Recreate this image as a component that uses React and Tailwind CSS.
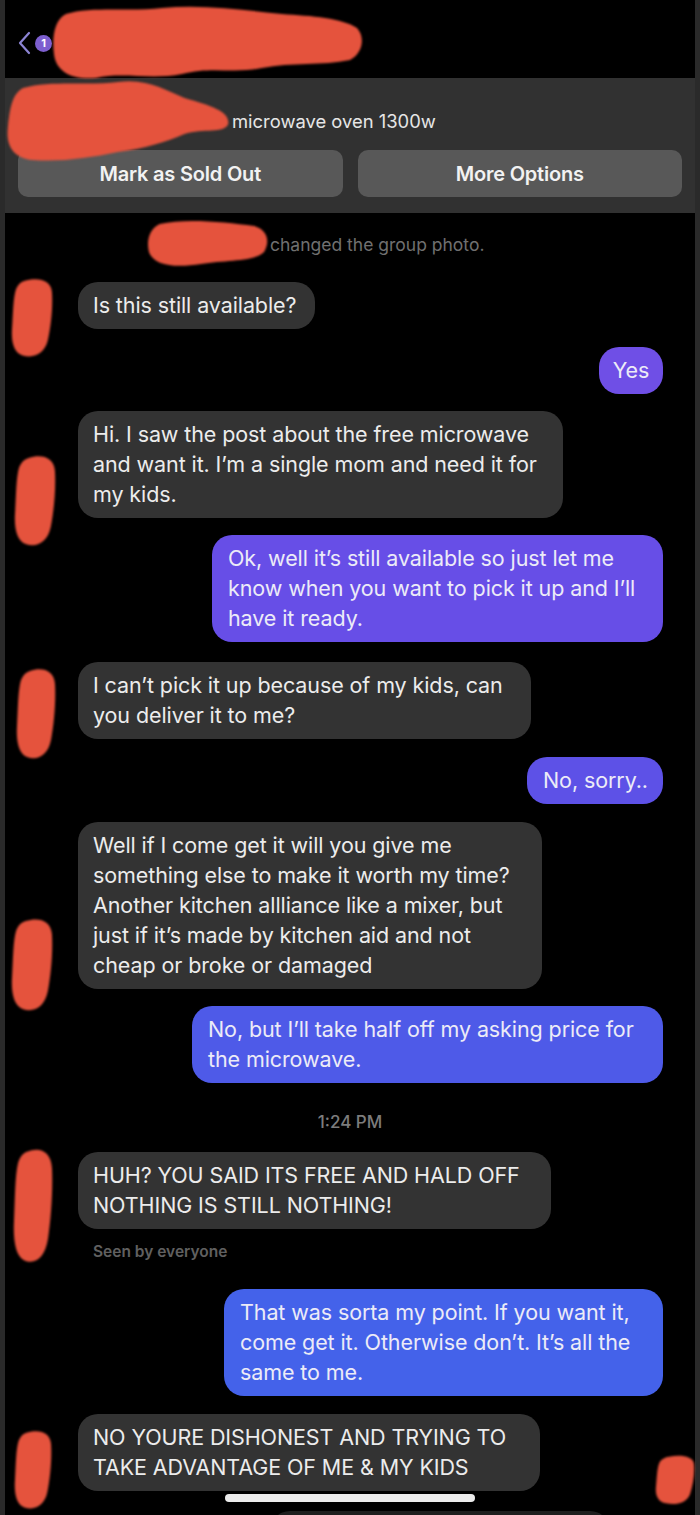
import React from "react";

const FONT = { fontFamily: "Inter, 'Noto Sans', sans-serif" };

function Blob({ className, d, vb }) {
  return (
    <svg className={"absolute blur-[1px] " + className} viewBox={vb} preserveAspectRatio="none">
      <path d={d} fill="#e5533d" />
    </svg>
  );
}

const avatarD =
  "M14 3 C26 -1 38 2 39 16 C40 34 38 56 35 72 C32 87 22 93 11 89 C3 86 0 74 1 58 C2 40 2 22 5 12 C7 7 10 4 14 3 Z";

function Recv({ lines, w, mt }) {
  return (
    <div className={"ml-[73px] shrink-0 rounded-[20px] bg-[#333333] pl-[15px] pt-2 pb-[9px] text-[21.5px] leading-[30px] tracking-[-0.1px] text-[#ececec] " + w + " " + mt}>
      {lines.map((l, i) => (
        <div key={i} className="whitespace-nowrap">{l}</div>
      ))}
    </div>
  );
}

function Sent({ lines, w, mt, bg, center }) {
  return (
    <div
      className={
        "self-end mr-[32px] shrink-0 rounded-[20px] pt-2 pb-[9px] text-[21.5px] leading-[30px] tracking-[-0.1px] text-[#ecebf7] " +
        (center ? "text-center " : "pl-[16px] ") +
        w + " " + mt + " " + bg
      }
    >
      {lines.map((l, i) => (
        <div key={i} className="whitespace-nowrap">{l}</div>
      ))}
    </div>
  );
}

export default function App() {
  return (
    <div className="relative h-[1515px] w-[700px] overflow-hidden bg-[#2a2a2a] pl-[5px] pr-[5px]" style={FONT}>
      <div className="relative h-full overflow-hidden bg-black">
        {/* header */}
        <div className="flex h-[78px] items-center pl-[13px]">
          <svg width="14" height="24" viewBox="0 0 14 24" className="mt-[8px]">
            <path d="M11 2 L2 12 L11 22" fill="none" stroke="#8c84d4" strokeWidth="2.2" strokeLinecap="round" strokeLinejoin="round" />
          </svg>
          <div className="ml-[3px] mt-[8px] flex h-[17px] w-[17px] items-center justify-center rounded-full bg-[#7d5fcf] text-[11px] font-bold text-white">
            1
          </div>
        </div>

        {/* listing panel */}
        <div className="flex h-[135px] flex-col bg-[#313131] px-[13px]">
          <div className="mt-[30px] pl-[214px] text-[18.4px] leading-[26px] text-[#e6e6e6]">microwave oven 1300w</div>
          <div className="mt-[16px] grid grid-cols-2 gap-[15px]">
            <div className="flex h-[47px] items-center justify-center rounded-[10px] bg-[#585858] text-[20px] font-semibold tracking-[-0.2px] text-[#f2f2f2]">
              Mark as Sold Out
            </div>
            <div className="flex h-[47px] items-center justify-center rounded-[10px] bg-[#585858] text-[20px] font-semibold tracking-[-0.2px] text-[#f2f2f2]">
              More Options
            </div>
          </div>
        </div>

        {/* chat */}
        <div className="flex flex-col">
          <div className="mt-[21px] pl-[265px] text-[17.5px] leading-[22px] text-[#707070]">changed the group photo.</div>

          <Recv mt="mt-[26px]" w="w-[237px]" lines={["Is this still available?"]} />
          <Sent mt="mt-[18px]" w="w-[64px]" bg="bg-[#6f4fe6]" center lines={["Yes"]} />
          <Recv
            mt="mt-[17px]"
            w="w-[485px]"
            lines={[
              "Hi. I saw the post about the free microwave",
              "and want it. I\u2019m a single mom and need it for",
              "my kids.",
            ]}
          />
          <Sent
            mt="mt-[17px]"
            w="w-[451px]"
            bg="bg-[#674ee7]"
            lines={[
              "Ok, well it\u2019s still available so just let me",
              "know when you want to pick it up and I\u2019ll",
              "have it ready.",
            ]}
          />
          <Recv
            mt="mt-[20px]"
            w="w-[453px]"
            lines={["I can\u2019t pick it up because of my kids, can", "you deliver it to me?"]}
          />
          <Sent mt="mt-[18px]" w="w-[136px]" bg="bg-[#5d51e7]" lines={["No, sorry.."]} />
          <Recv
            mt="mt-[18px]"
            w="w-[464px]"
            lines={[
              "Well if I come get it will you give me",
              "something else to make it worth my time?",
              "Another kitchen allliance like a mixer, but",
              "just if it\u2019s made by kitchen aid and not",
              "cheap or broke or damaged",
            ]}
          />
          <Sent
            mt="mt-[17px]"
            w="w-[471px]"
            bg="bg-[#4e5ae8]"
            lines={["No, but I\u2019ll take half off my asking price for", "the microwave."]}
          />
          <div className="mt-[28px] text-center text-[17px] font-medium leading-[22px] text-[#7c7c7c]">1:24 PM</div>
          <Recv
            mt="mt-[19px]"
            w="w-[473px]"
            lines={["HUH? YOU SAID ITS FREE AND HALD OFF", "NOTHING IS STILL NOTHING!"]}
          />
          <div className="mt-[13px] pl-[88px] text-[15.5px] font-semibold leading-[20px] text-[#606060]">Seen by everyone</div>
          <Sent
            mt="mt-[27px]"
            w="w-[439px]"
            bg="bg-[#4462ea]"
            lines={[
              "That was sorta my point. If you want it,",
              "come get it. Otherwise don\u2019t. It\u2019s all the",
              "same to me.",
            ]}
          />
          <Recv
            mt="mt-[18px]"
            w="w-[462px]"
            lines={["NO YOURE DISHONEST AND TRYING TO", "TAKE ADVANTAGE OF ME & MY KIDS"]}
          />
          <div className="ml-[265px] mt-[20px] h-[40px] w-[340px] shrink-0 rounded-[20px] bg-[#1e1e1e]" />
        </div>
      </div>

      {/* redaction scribbles */}
      <Blob
        className="left-[52px] top-[4px] h-[76px] w-[312px]"
        vb="0 0 312 76"
        d="M14 10 C40 2 80 8 110 4 C150 0 190 6 230 10 C260 12 290 14 305 24 C314 34 310 50 298 56 C270 62 240 58 210 64 C180 70 160 62 130 70 C100 76 70 68 44 74 C20 76 4 68 2 50 C0 34 2 16 14 10 Z"
      />
      <Blob
        className="left-[4px] top-[76px] h-[88px] w-[228px]"
        vb="0 0 240 88"
        d="M20 12 C50 4 90 10 120 6 C150 2 170 14 190 22 C220 30 238 36 236 48 C232 58 210 52 190 58 C170 66 150 72 120 76 C90 82 60 86 30 84 C10 82 2 70 4 52 C6 34 8 18 20 12 Z"
      />
      <Blob
        className="left-[146px] top-[218px] h-[50px] w-[124px]"
        vb="0 0 126 50"
        d="M14 6 C40 0 80 4 110 8 C124 12 126 24 120 34 C110 44 80 42 56 46 C30 50 8 48 3 34 C0 22 4 10 14 6 Z"
      />
      <Blob className="left-[11px] top-[278px] h-[80px] w-[42px]" vb="0 0 40 92" d={avatarD} />
      <Blob className="left-[14px] top-[455px] h-[92px] w-[42px]" vb="0 0 40 92" d={avatarD} />
      <Blob className="left-[16px] top-[668px] h-[92px] w-[40px]" vb="0 0 40 92" d={avatarD} />
      <Blob className="left-[11px] top-[918px] h-[94px] w-[42px]" vb="0 0 40 92" d={avatarD} />
      <Blob className="left-[13px] top-[1148px] h-[116px] w-[40px]" vb="0 0 40 92" d={avatarD} />
      <Blob className="left-[14px] top-[1430px] h-[80px] w-[38px]" vb="0 0 40 92" d={avatarD} />
      <Blob className="left-[655px] top-[1455px] h-[50px] w-[40px]" vb="0 0 40 92" d={avatarD} />

      {/* home indicator */}
      <div className="absolute left-[225px] top-[1494px] h-[8px] w-[250px] rounded-full bg-[#ececec]" />
    </div>
  );
}
